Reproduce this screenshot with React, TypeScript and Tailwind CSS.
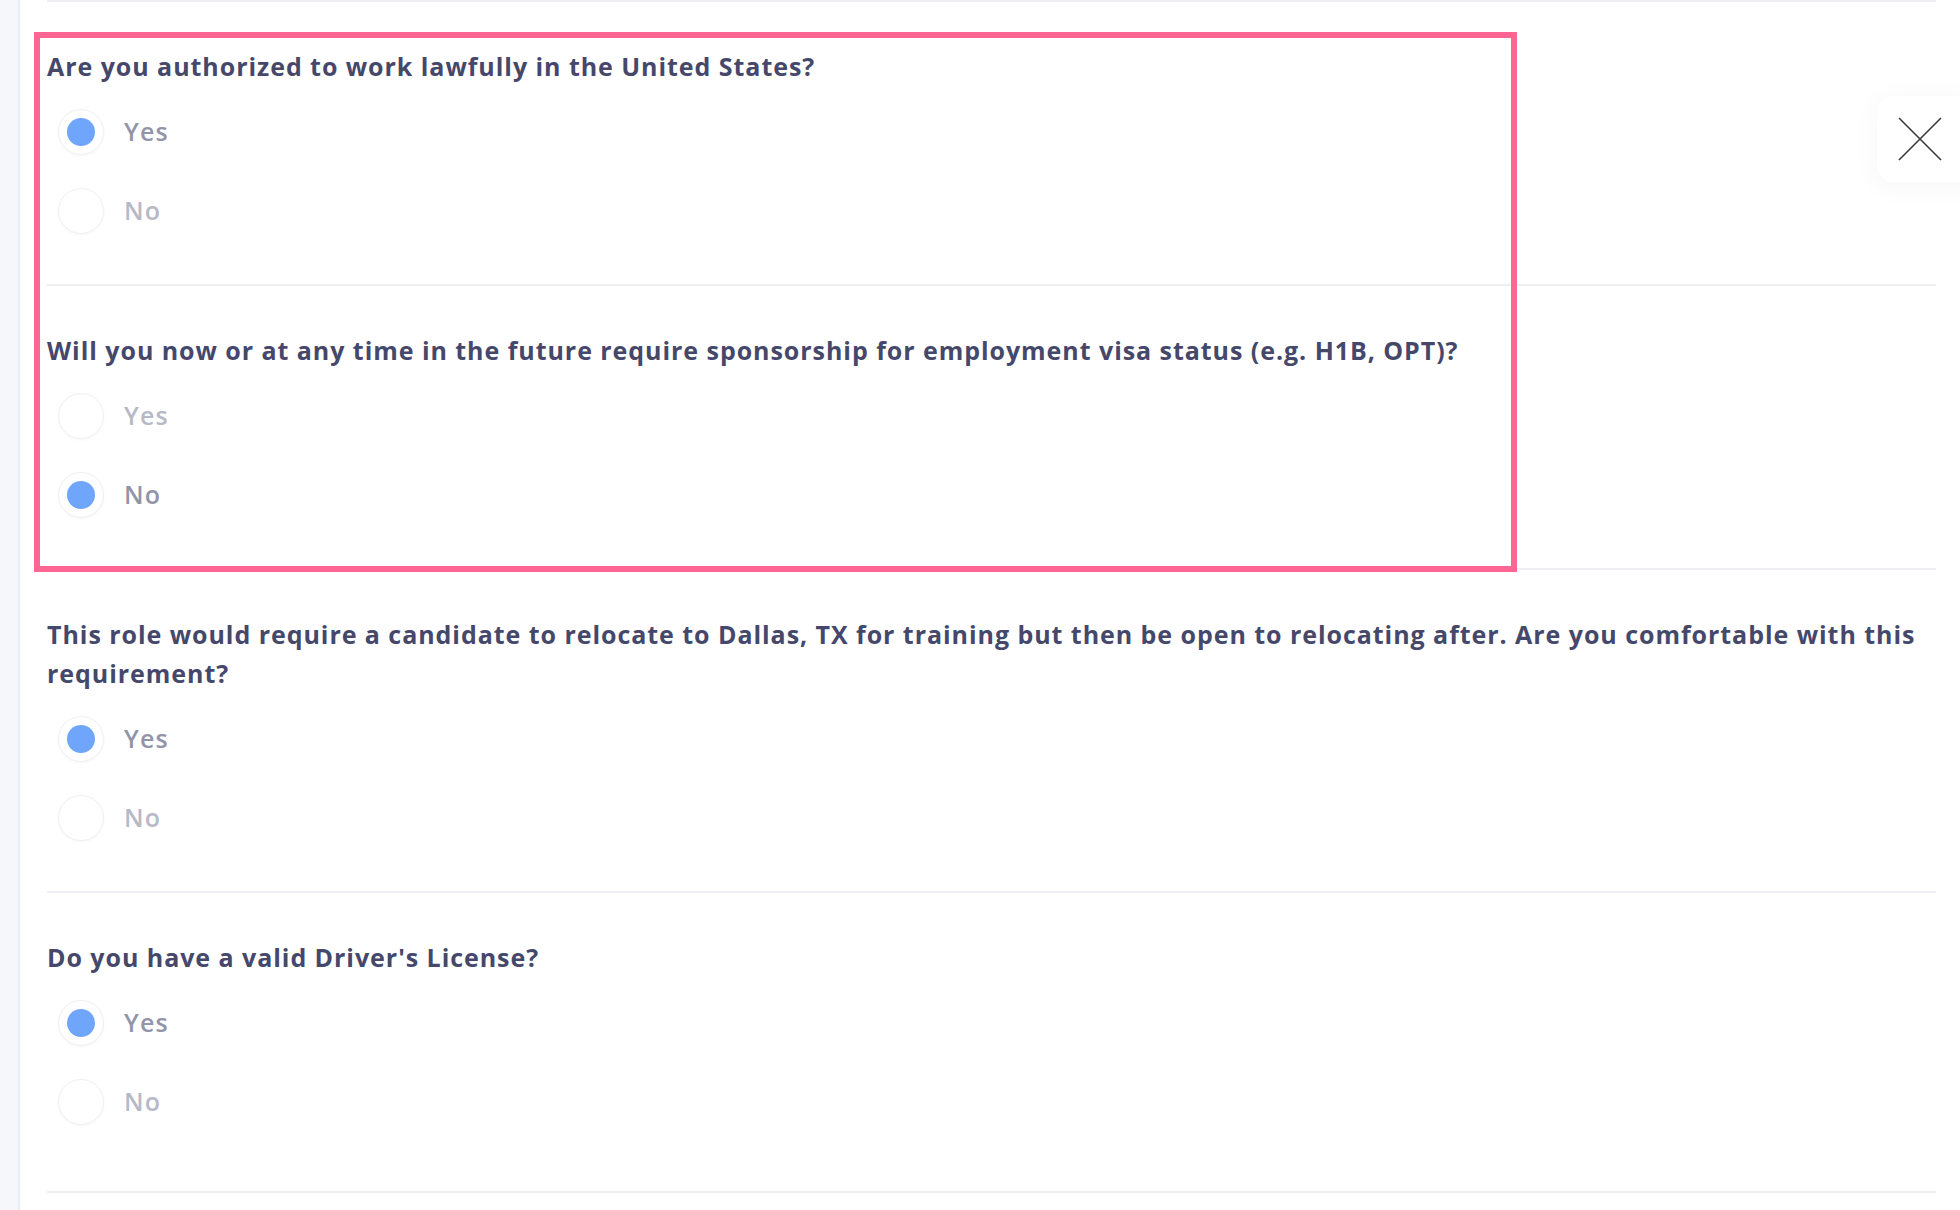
import { useState } from "react";

type Question = {
  id: string;
  text: string;
  answer: "Yes" | "No";
};

const QUESTIONS: Question[] = [
  { id: "auth", text: "Are you authorized to work lawfully in the United States?", answer: "Yes" },
  {
    id: "visa",
    text: "Will you now or at any time in the future require sponsorship for employment visa status (e.g. H1B, OPT)?",
    answer: "No",
  },
  {
    id: "relocate",
    text: "This role would require a candidate to relocate to Dallas, TX for training but then be open to relocating after. Are you comfortable with this requirement?",
    answer: "Yes",
  },
  { id: "license", text: "Do you have a valid Driver's License?", answer: "Yes" },
];

function Radio({ checked, label, onClick }: { checked: boolean; label: string; onClick: () => void }) {
  return (
    <button type="button" onClick={onClick} className="flex h-[46px] items-center gap-[20px] pl-[11px] text-left">
      <span className="flex h-[46px] w-[46px] items-center justify-center rounded-full border border-[#f0f0f5] bg-white shadow-[0_1px_3px_rgba(60,60,110,0.04)]">
        {checked ? <span className="h-[28px] w-[28px] rounded-full bg-[#6fa6fb]" /> : null}
      </span>
      <span
        className={
          checked
            ? "text-[25px] font-semibold tracking-[1.2px] text-[#9294aa]"
            : "text-[25px] font-semibold tracking-[1.2px] text-[#b7b9c7]"
        }
      >
        {label}
      </span>
    </button>
  );
}

function QuestionBlock({ q, last }: { q: Question; last: boolean }) {
  const [value, setValue] = useState<"Yes" | "No">(q.answer);
  return (
    <>
      <div className={last ? "pt-[45px] pb-[66px]" : "pt-[45px] pb-[50px]"}>
        <div className="text-[25px] font-bold leading-[39px] tracking-[0.95px] text-[#45486a]">{q.text}</div>
        <div className="mt-[23px] flex flex-col items-start gap-[33px]">
          <Radio checked={value === "Yes"} label="Yes" onClick={() => setValue("Yes")} />
          <Radio checked={value === "No"} label="No" onClick={() => setValue("No")} />
        </div>
      </div>
      <div className="h-[2px] bg-[#efeff4]" />
    </>
  );
}

export default function App() {
  return (
    <div
      className="flex min-h-[1210px] w-full overflow-hidden bg-white"
      style={{ fontFamily: '"Open Sans", "Noto Sans", sans-serif' }}
    >
      {/* sidebar edge */}
      <div className="w-[20px] shrink-0 border-r-[2px] border-[#ededf5] bg-[#f6f7fb]" />

      <div className="relative flex-1 pl-[27px] pr-[24px]">
        <div className="h-[2px] bg-[#efeff4]" />
        {QUESTIONS.map((q, i) => (
          <QuestionBlock key={q.id} q={q} last={i === QUESTIONS.length - 1} />
        ))}

        {/* highlight annotation */}
        <div className="pointer-events-none absolute left-[14px] top-[32px] h-[540px] w-[1483px] border-[6px] border-[#fd6592]" />

        {/* close button */}
        <button
          type="button"
          className="absolute right-[-20px] top-[96px] flex h-[86px] w-[103px] items-center rounded-[16px] bg-white pl-[21px] shadow-[0_4px_24px_rgba(70,72,120,0.05)]"
        >
          <svg width="44" height="44" viewBox="0 0 44 44" fill="none" stroke="#3b3b3b" strokeWidth="1.6">
            <path d="M1 1L43 43M43 1L1 43" />
          </svg>
        </button>
      </div>
    </div>
  );
}
